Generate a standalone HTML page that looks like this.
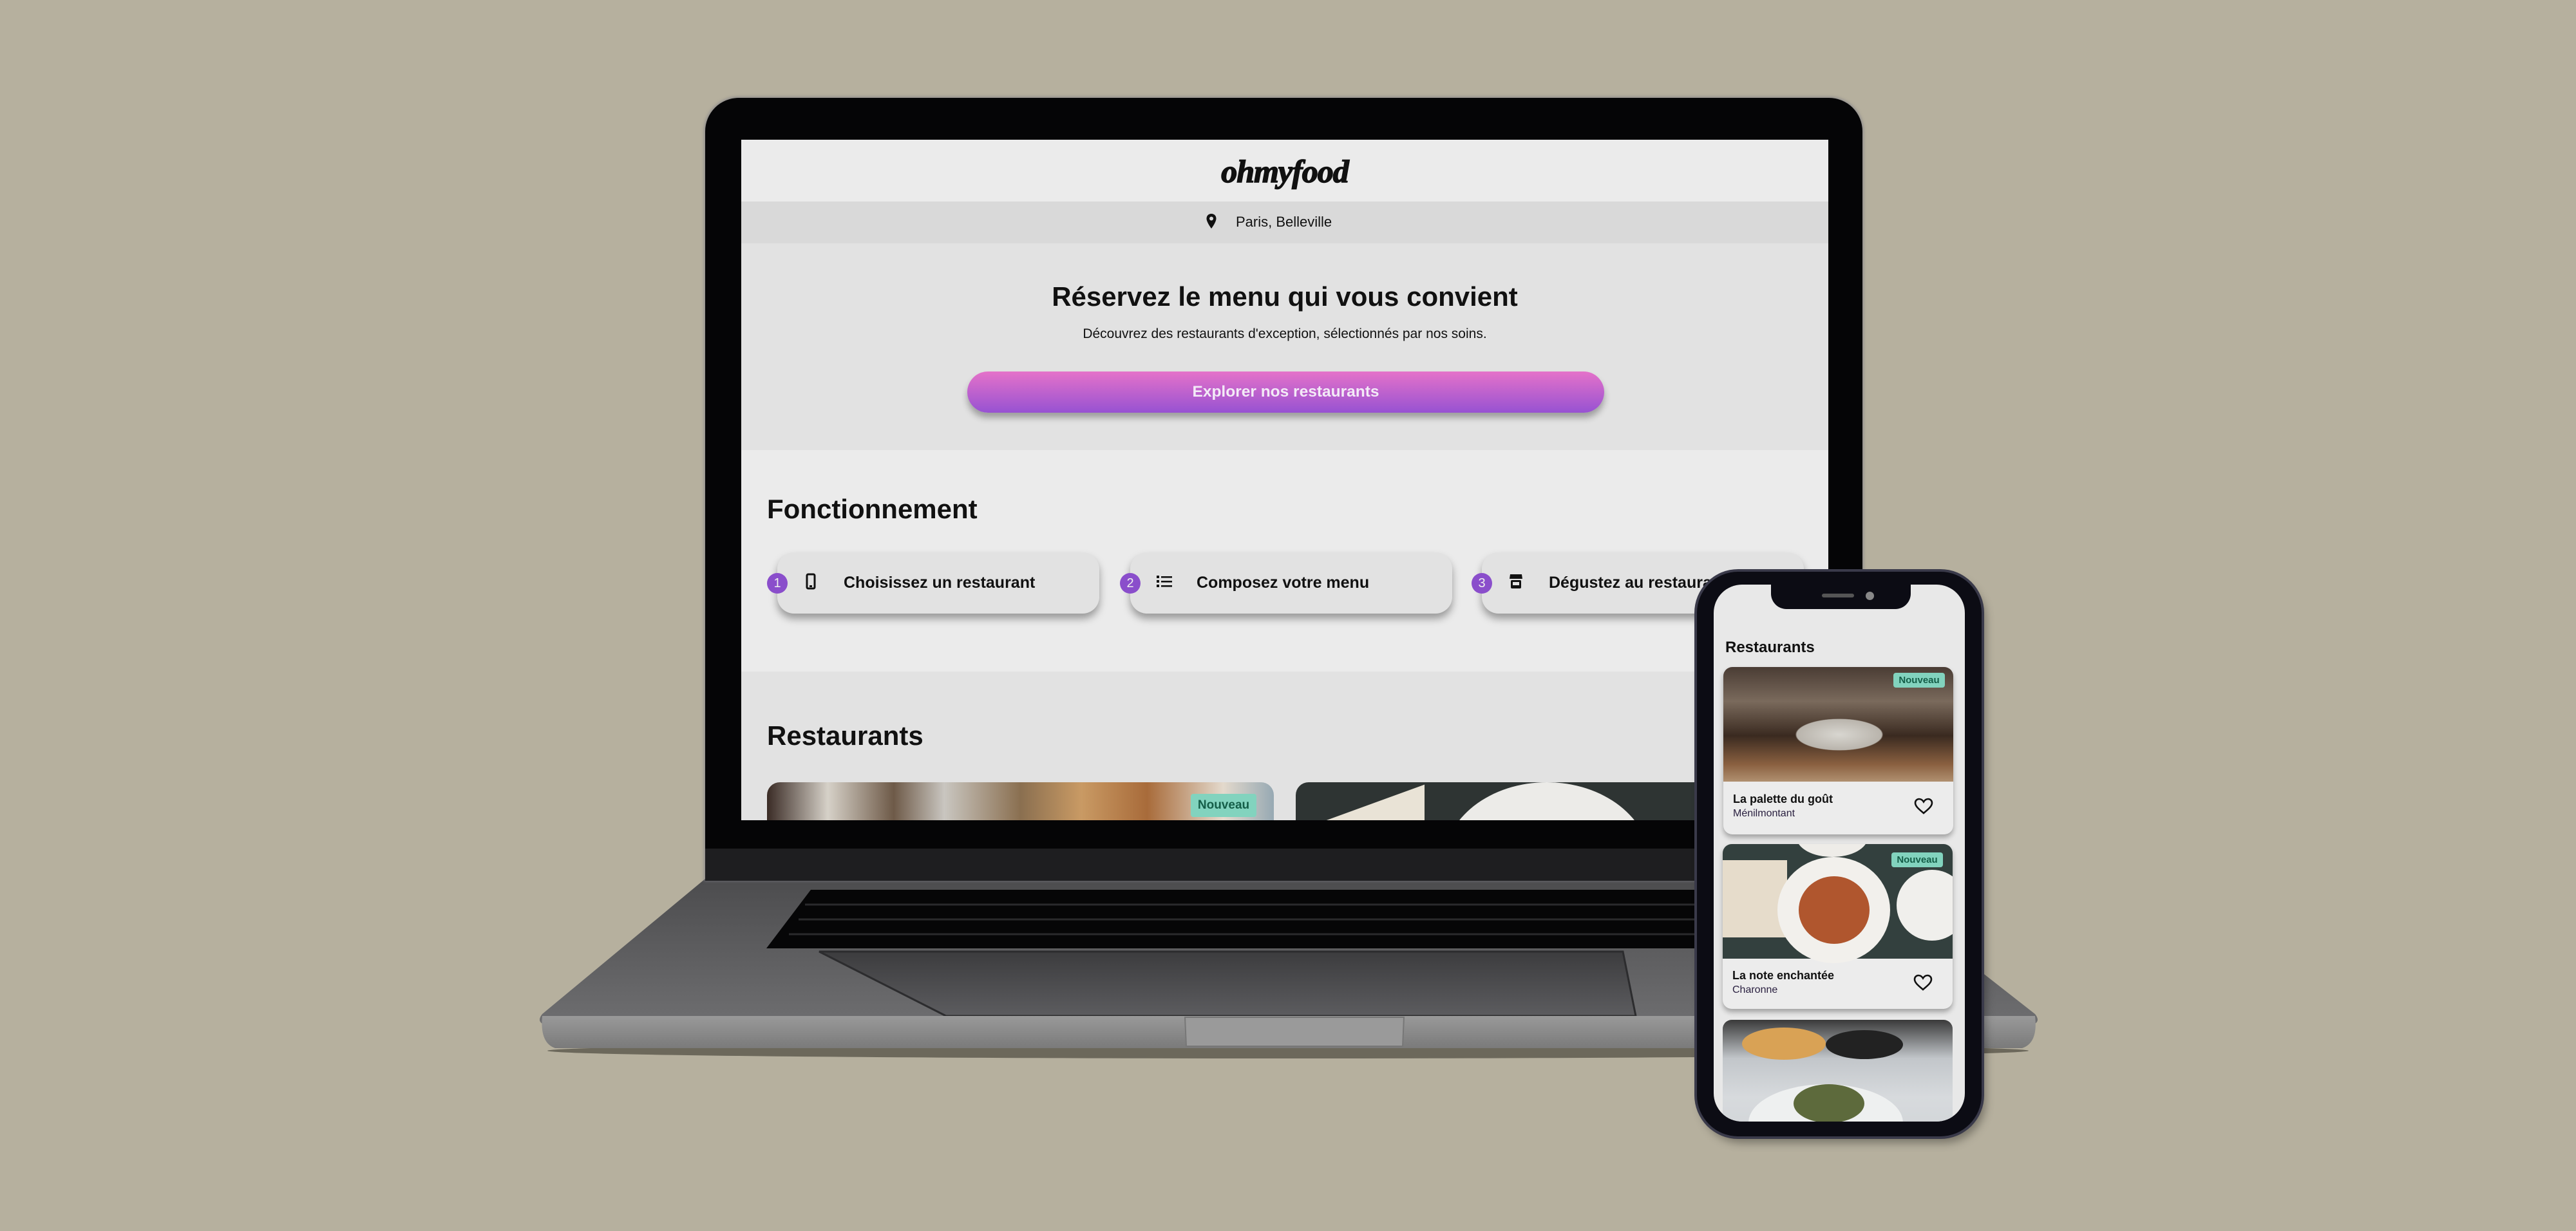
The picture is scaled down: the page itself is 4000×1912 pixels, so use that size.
<!DOCTYPE html>
<html><head><meta charset="utf-8">
<style>
*{margin:0;padding:0;box-sizing:border-box}
body{width:4000px;height:1912px;background:#b6b09e;position:relative;overflow:hidden;font-family:"Liberation Sans",Arial,sans-serif;color:#111}
.abs{position:absolute}
.lid{left:1095px;top:152px;width:1797px;height:1215px;background:#050506;border-radius:52px 52px 0 0;box-shadow:0 0 4px 2px rgba(120,120,130,.6)}
.screen{left:1151px;top:217px;width:1688px;height:1057px;background:#ebebeb;overflow:hidden}
.screen .abs{position:absolute}
.card{background:#e2e2e2;border-radius:26px;box-shadow:0 8px 12px rgba(0,0,0,.35)}
.num{width:32px;height:32px;border-radius:50%;background:#8a4ecb;color:#eee;font-size:20px;text-align:center;line-height:32px}
.ct{font-weight:bold;font-size:25px;line-height:32px}
.badge{background:#82d3be;color:#145e48;font-weight:bold;border-radius:4px;text-align:center}
</style></head><body>

<svg class="abs" style="left:0;top:0" width="4000" height="1912">
<defs>
<linearGradient id="bg1" x1="0" y1="0" x2="0" y2="1"><stop offset="0" stop-color="#4c4c4e"/><stop offset="1" stop-color="#6e6e70"/></linearGradient>
<linearGradient id="fe" x1="0" y1="0" x2="0" y2="1"><stop offset="0" stop-color="#999"/><stop offset=".5" stop-color="#8a8a8a"/><stop offset="1" stop-color="#7a7a7a"/></linearGradient>
<linearGradient id="tp" x1="0" y1="0" x2="0" y2="1"><stop offset="0" stop-color="#3c3c3e"/><stop offset="1" stop-color="#5c5c5f"/></linearGradient>
</defs>
<ellipse cx="2000" cy="1632" rx="1150" ry="12" fill="#3a382f" opacity=".6"/>
<path d="M1095 1365 L2892 1365 L3160 1575 Q3168 1585 3160 1590 L842 1590 Q834 1585 842 1575 Z" fill="url(#bg1)"/>
<path d="M1259 1382 L2700 1382 L2740 1473 L1190 1473 Z" fill="#060607"/>
<g stroke="#2a2a2c" stroke-width="3">
<path d="M1250 1405 L2710 1405 M1240 1428 L2720 1428 M1225 1451 L2730 1451"/>
</g>
<path d="M1272 1478 L2520 1478 L2540 1578 L1469 1578 Z" fill="url(#tp)" stroke="#2c2c2e" stroke-width="3"/>
<path d="M842 1578 L3160 1578 Q3165 1620 3140 1628 L862 1628 Q838 1620 842 1578Z" fill="url(#fe)"/>
<path d="M1840 1580 L2180 1580 L2178 1625 L1842 1625Z" fill="#9a9a9a" stroke="#777" stroke-width="2"/>
</svg>

<div class="abs lid"></div>
<div class="abs" style="left:1095px;top:1318px;width:1797px;height:50px;background:#1e1e20"></div>

<div class="abs screen">
  <div class="abs" style="left:0;top:0;width:1688px;height:96px;background:#ebebeb"></div>
  <div class="abs" style="left:0;top:20px;width:1688px;text-align:center;font-family:'Liberation Serif',serif;font-style:italic;font-weight:900;font-size:50px;letter-spacing:-1px;-webkit-text-stroke:1.5px #111">ohmyfood</div>
  <div class="abs" style="left:0;top:96px;width:1688px;height:65px;background:#d9d9d9"></div>
  <svg class="abs" style="left:721px;top:114px" width="18" height="26" viewBox="0 0 18 26"><path d="M9 1C4.5 1 1.5 4.3 1.5 8.5 1.5 14 9 24 9 24S16.5 14 16.5 8.5C16.5 4.3 13.5 1 9 1Z" fill="#111"/><circle cx="9" cy="8.5" r="3" fill="#d9d9d9"/></svg>
  <div class="abs" style="left:768px;top:115px;font-size:22px">Paris, Belleville</div>
  <div class="abs" style="left:0;top:161px;width:1688px;height:321px;background:#e2e2e2"></div>
  <div class="abs" style="left:0;top:220px;width:1688px;text-align:center;font-weight:bold;font-size:42px">Réservez le menu qui vous convient</div>
  <div class="abs" style="left:0;top:290px;width:1688px;text-align:center;font-size:21px">Découvrez des restaurants d'exception, sélectionnés par nos soins.</div>
  <div class="abs" style="left:351px;top:360px;width:989px;height:64px;border-radius:32px;background:linear-gradient(#e572c9,#9752d2);box-shadow:0 8px 10px rgba(0,0,0,.3);color:#f3eaf7;font-weight:bold;font-size:24.5px;text-align:center;line-height:64px">Explorer nos restaurants</div>
  <div class="abs" style="left:0;top:482px;width:1688px;height:344px;background:#ebebeb"></div>
  <div class="abs" style="left:40px;top:550px;font-weight:bold;font-size:42px">Fonctionnement</div>

  <div class="abs card" style="left:56px;top:641px;width:500px;height:95px"></div>
  <div class="abs num" style="left:40px;top:673px">1</div>
  <svg class="abs" style="left:100px;top:673px" width="16" height="26" viewBox="0 0 16 26"><rect x="2" y="2" width="12" height="22" rx="2" fill="none" stroke="#111" stroke-width="3"/><rect x="6" y="19" width="4" height="3" fill="#111"/></svg>
  <div class="abs ct" style="left:159px;top:672px">Choisissez un restaurant</div>

  <div class="abs card" style="left:604px;top:641px;width:500px;height:95px"></div>
  <div class="abs num" style="left:588px;top:673px">2</div>
  <svg class="abs" style="left:644px;top:674px" width="26" height="24" viewBox="0 0 26 24"><g fill="#111"><rect x="1" y="3" width="4" height="4"/><rect x="1" y="10" width="4" height="4"/><rect x="1" y="17" width="4" height="4"/><rect x="8" y="4" width="17" height="2.6"/><rect x="8" y="11" width="17" height="2.6"/><rect x="8" y="18" width="17" height="2.6"/></g></svg>
  <div class="abs ct" style="left:707px;top:672px">Composez votre menu</div>

  <div class="abs card" style="left:1150px;top:641px;width:500px;height:95px"></div>
  <div class="abs num" style="left:1134px;top:673px">3</div>
  <svg class="abs" style="left:1191px;top:673px" width="24" height="26" viewBox="0 0 24 26"><path d="M3 2H21L22 9H2Z" fill="#111"/><rect x="4" y="11" width="16" height="13" rx="2" fill="#111"/><rect x="7" y="14" width="10" height="5" fill="#e2e2e2"/></svg>
  <div class="abs ct" style="left:1254px;top:672px">Dégustez au restaurant</div>

  <div class="abs" style="left:0;top:826px;width:1688px;height:240px;background:#e2e2e2"></div>
  <div class="abs" style="left:40px;top:902px;font-weight:bold;font-size:42px">Restaurants</div>
  <div class="abs" style="left:40px;top:998px;width:787px;height:120px;border-radius:20px;overflow:hidden;background:linear-gradient(90deg,#3a2b25 0%,#d6d1c8 12%,#6e5a48 25%,#c9c6c0 35%,#8a6f50 50%,#c99a64 62%,#a86b3a 75%,#e3d9cc 90%,#97a9b3 100%)">
    <div class="abs badge" style="left:658px;top:18px;width:102px;height:36px;font-size:19px;line-height:36px">Nouveau</div>
  </div>
  <div class="abs" style="left:861px;top:998px;width:830px;height:120px;border-radius:20px 0 0 0;overflow:hidden;background:#2e3433">
    <div class="abs" style="left:0;top:40px;width:200px;height:120px;background:#e9e3d6;transform:skewY(-20deg)"></div>
    <div class="abs" style="left:230px;top:0;width:320px;height:250px;border-radius:50%;background:#ecebe8"></div>
  </div>
</div>

<div class="abs" style="left:2635px;top:888px;width:442px;height:877px;border-radius:64px;background:#0c0c14;box-shadow:0 0 0 4px #3a3a4a,6px 10px 14px rgba(0,0,0,.35)"></div>
<div class="abs" style="left:2661px;top:908px;width:390px;height:834px;border-radius:44px;background:#e8e8e8;overflow:hidden">
  <div class="abs" style="left:89px;top:0;width:217px;height:38px;background:#0c0c14;border-radius:0 0 24px 24px"></div>
  <div class="abs" style="left:168px;top:14px;width:50px;height:6px;border-radius:3px;background:#555"></div>
  <div class="abs" style="left:236px;top:11px;width:13px;height:13px;border-radius:50%;background:#888"></div>
  <div class="abs" style="left:18px;top:84px;font-weight:bold;font-size:24px">Restaurants</div>

  <div class="abs" style="left:15px;top:128px;width:357px;height:260px;border-radius:14px;background:#ececec;box-shadow:0 5px 8px rgba(0,0,0,.3);overflow:hidden">
    <div class="abs" style="left:0;top:0;width:357px;height:178px;background:radial-gradient(ellipse 110px 40px at 180px 105px,#d8d6d0 0%,#b9b4ac 60%,transparent 62%),linear-gradient(180deg,#4a3c34 0%,#7a6a5c 30%,#3a2a20 60%,#8a6040 85%,#b09070 100%)">
      <div class="abs badge" style="left:264px;top:9px;width:80px;height:23px;font-size:15px;line-height:23px">Nouveau</div>
    </div>
    <div class="abs" style="left:15px;top:195px;font-weight:bold;font-size:18px">La palette du goût</div>
    <div class="abs" style="left:15px;top:219px;font-size:16px;color:#2a2040">Ménilmontant</div>
    <svg class="abs" style="left:296px;top:203px" width="30" height="26" viewBox="0 0 30 26"><path d="M15 24C8 18 2 13.5 2 8 2 4.5 4.8 2 8 2c3 0 5.5 2 7 4.5C16.5 4 19 2 22 2c3.2 0 6 2.5 6 6 0 5.5-6 10-13 16Z" fill="none" stroke="#111" stroke-width="2.6"/></svg>
  </div>

  <div class="abs" style="left:14px;top:403px;width:357px;height:256px;border-radius:14px;background:#ececec;box-shadow:0 5px 8px rgba(0,0,0,.3);overflow:hidden">
    <div class="abs" style="left:0;top:0;width:357px;height:178px;background:#33403e">
      <div class="abs" style="left:0;top:25px;width:100px;height:120px;background:#e6dccb"></div>
      <div class="abs" style="left:85px;top:20px;width:175px;height:165px;border-radius:50%;background:#f2f0ec"></div>
      <div class="abs" style="left:118px;top:50px;width:110px;height:105px;border-radius:50%;background:#b0562e"></div>
      <div class="abs" style="left:270px;top:40px;width:110px;height:110px;border-radius:50%;background:#f0efec"></div>
      <div class="abs" style="left:115px;top:-40px;width:110px;height:60px;border-radius:50%;background:#eeece8"></div>
      <div class="abs badge" style="left:262px;top:13px;width:80px;height:23px;font-size:15px;line-height:23px">Nouveau</div>
    </div>
    <div class="abs" style="left:15px;top:194px;font-weight:bold;font-size:18px">La note enchantée</div>
    <div class="abs" style="left:15px;top:218px;font-size:16px;color:#2a2040">Charonne</div>
    <svg class="abs" style="left:296px;top:202px" width="30" height="26" viewBox="0 0 30 26"><path d="M15 24C8 18 2 13.5 2 8 2 4.5 4.8 2 8 2c3 0 5.5 2 7 4.5C16.5 4 19 2 22 2c3.2 0 6 2.5 6 6 0 5.5-6 10-13 16Z" fill="none" stroke="#111" stroke-width="2.6"/></svg>
  </div>

  <div class="abs" style="left:14px;top:676px;width:357px;height:200px;border-radius:14px;overflow:hidden;background:linear-gradient(180deg,#3a3a3a 0%,#c2c6ca 30%,#d7dadd 60%,#cfd3d6 100%)">
    <div class="abs" style="left:30px;top:12px;width:130px;height:50px;border-radius:50%;background:#d9a255"></div>
    <div class="abs" style="left:160px;top:16px;width:120px;height:45px;border-radius:50%;background:#222"></div>
    <div class="abs" style="left:40px;top:100px;width:240px;height:120px;border-radius:50%;background:#eef0f0"></div>
    <div class="abs" style="left:110px;top:100px;width:110px;height:60px;border-radius:50%;background:#5d6a3c"></div>
  </div>
</div>
</body></html>
